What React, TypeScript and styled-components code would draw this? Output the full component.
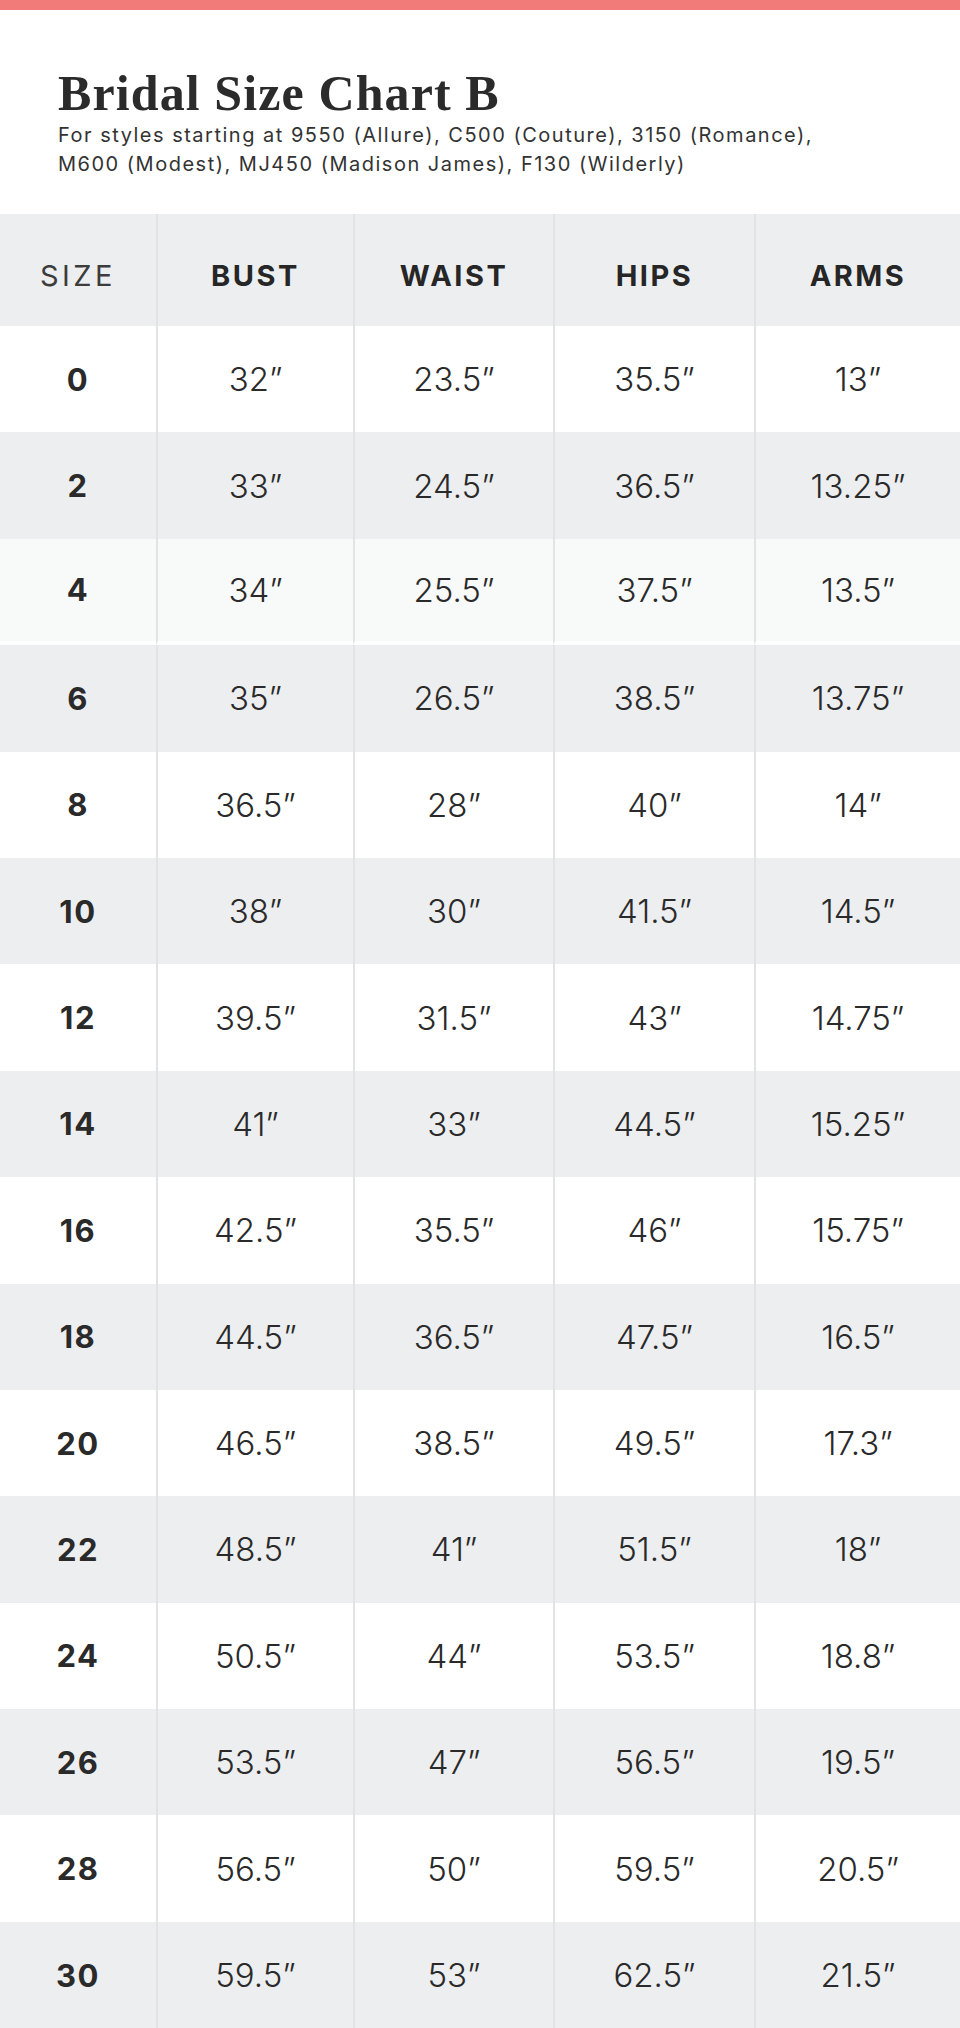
import styled, { createGlobalStyle } from 'styled-components';

const GlobalStyle = createGlobalStyle`
    html, body {
        margin: 0;
        padding: 0;
        background: #ffffff;
    }
`;

type Tone = 'white' | 'gray' | 'tint';

const columns = ['SIZE', 'BUST', 'WAIST', 'HIPS', 'ARMS'];

const rows: string[][] = [
    ['0', '32”', '23.5”', '35.5”', '13”'],
    ['2', '33”', '24.5”', '36.5”', '13.25”'],
    ['4', '34”', '25.5”', '37.5”', '13.5”'],
    ['6', '35”', '26.5”', '38.5”', '13.75”'],
    ['8', '36.5”', '28”', '40”', '14”'],
    ['10', '38”', '30”', '41.5”', '14.5”'],
    ['12', '39.5”', '31.5”', '43”', '14.75”'],
    ['14', '41”', '33”', '44.5”', '15.25”'],
    ['16', '42.5”', '35.5”', '46”', '15.75”'],
    ['18', '44.5”', '36.5”', '47.5”', '16.5”'],
    ['20', '46.5”', '38.5”', '49.5”', '17.3”'],
    ['22', '48.5”', '41”', '51.5”', '18”'],
    ['24', '50.5”', '44”', '53.5”', '18.8”'],
    ['26', '53.5”', '47”', '56.5”', '19.5”'],
    ['28', '56.5”', '50”', '59.5”', '20.5”'],
    ['30', '59.5”', '53”', '62.5”', '21.5”'],
];

const toneFor = (i: number): Tone => {
    if (i % 2 === 1) return 'gray';
    if (i === 2) return 'tint';
    return 'white';
};

const App = () => {
    return (
        <Wrapper>
            <GlobalStyle />
            <TopBar />
            <Intro>
                <Title>Bridal Size Chart B</Title>
                <Subtitle>
                    For styles starting at 9550 (Allure), C500 (Couture), 3150 (Romance),
                    <br />
                    M600 (Modest), MJ450 (Madison James), F130 (Wilderly)
                </Subtitle>
            </Intro>
            <Table>
                {columns.map((c, ci) => (
                    <HeadCell key={c} $first={ci === 0}>{c}</HeadCell>
                ))}
                {rows.map((r, ri) =>
                    r.map((v, ci) => (
                        <Cell key={ri + '-' + ci} $tone={toneFor(ri)} $first={ci === 0}>
                            {v}
                        </Cell>
                    ))
                )}
            </Table>
        </Wrapper>
    );
};

export default App;

const Wrapper = styled.div`
    width: 960px;
    background: #ffffff;
    color: #2a2a2a;
`;

const TopBar = styled.div`
    height: 10px;
    background: #f07b78;
`;

const Intro = styled.div`
    padding: 58px 0 35px 58px;
`;

const Title = styled.h1`
    margin: 0;
    font-family: "Liberation Serif", serif;
    font-weight: 700;
    font-size: 50px;
    line-height: 50px;
    letter-spacing: 1.1px;
    color: #2b2b2b;
`;

const Subtitle = styled.p`
    margin: 3px 0 0;
    font-family: Inter, "Open Sans", sans-serif;
    font-size: 20px;
    line-height: 29px;
    letter-spacing: 1.5px;
    color: #333333;
`;

const Table = styled.div`
    display: grid;
    grid-template-columns: 156px 197px 200px 201px 206px;
    grid-template-rows: 112px repeat(16, 106.4px);
`;

const HeadCell = styled.div<{ $first: boolean }>`
    display: flex;
    align-items: center;
    justify-content: center;
    padding-top: 10px;
    box-sizing: border-box;
    background: #edeef0;
    border-left: ${p => (p.$first ? 'none' : '2px solid #e2e3e5')};
    font-family: Inter, sans-serif;
    font-size: 29px;
    font-weight: ${p => (p.$first ? 400 : 700)};
    letter-spacing: ${p => (p.$first ? '3.5px' : '2.5px')};
    color: ${p => (p.$first ? '#3c3c3c' : '#262626')};
`;

const Cell = styled.div<{ $tone: Tone; $first: boolean }>`
    display: flex;
    align-items: center;
    justify-content: center;
    box-sizing: border-box;
    background: ${p => (p.$tone === 'gray' ? '#edeef0' : p.$tone === 'tint' ? '#f8f9f9' : '#ffffff')};
    background-clip: padding-box;
    border-bottom: ${p => (p.$tone === 'tint' ? '4px solid #ffffff' : 'none')};
    border-left: ${p => (p.$first ? 'none' : '2px solid #e2e3e5')};
    font-family: Inter, sans-serif;
    font-size: ${p => (p.$first ? '31px' : '33px')};
    font-weight: ${p => (p.$first ? 700 : 300)};
    letter-spacing: ${p => (p.$first ? '1.5px' : '0')};
    color: #2a2a2a;
`;
